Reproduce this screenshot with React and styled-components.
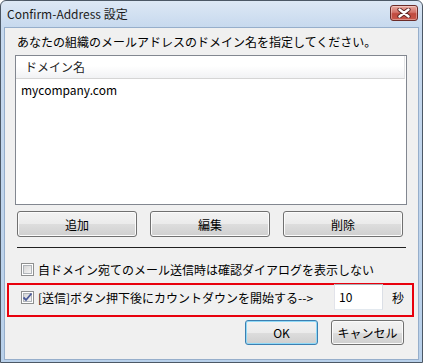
import React from 'react'
import styled, { createGlobalStyle } from 'styled-components'

const GlobalStyle = createGlobalStyle`
  html, body {
    margin: 0;
    padding: 0;
    background: #ffffff;
  }
  * {
    box-sizing: border-box;
  }
`

const Window = styled.div`
  width: 423px;
  height: 363px;
  display: flex;
  flex-direction: column;
  border: 1px solid #4c5866;
  border-radius: 6px 6px 0 0;
  background: linear-gradient(180deg, #dde8f5 0px, #c7d9ee 26px, #b8d0ea 100%);
  padding: 0 3px 2px 3px;
  font-family: "Noto Sans CJK JP", "Noto Sans", sans-serif;
  font-size: 12px;
  color: #000;
`

const TitleBar = styled.div`
  height: 26px;
  display: flex;
  align-items: flex-start;
  justify-content: space-between;
`

const Title = styled.div`
  padding-left: 3px;
  line-height: 26px;
  color: #1b1b1b;
  font-size: 12px;
`

const CloseButton = styled.div`
  width: 28px;
  height: 16px;
  margin-top: 4px;
  margin-right: 1px;
  border: 1px solid #6b2b28;
  border-radius: 3px;
  background: linear-gradient(180deg, #e9aaa0 0%, #d3736a 45%, #bf4a3f 55%, #c9574a 100%);
  box-shadow: inset 0 0 0 1px rgba(255, 255, 255, 0.35);
  display: flex;
  align-items: center;
  justify-content: center;
`

const Client = styled.div`
  flex: 1;
  display: flex;
  flex-direction: column;
  background: #f0f0f0;
  border: 1px solid #96aecb;
  padding: 6px 11px 0 10px;
`

const Label = styled.div`
  line-height: 16px;
  margin-left: 2px;
`

const ListBox = styled.div`
  margin-top: 5px;
  height: 150px;
  border: 1px solid #828790;
  background: #fff;
`

const ListHeader = styled.div`
  height: 23px;
  padding-left: 9px;
  line-height: 22px;
  margin-right: 1px;
  color: #1e1e1e;
  background: linear-gradient(180deg, #ffffff 0%, #ffffff 45%, #f1f2f4 100%);
  border-bottom: 1px solid #d5d5d5;
  border-right: 1px solid #e3e4e6;
`

const ListRow = styled.div`
  padding-left: 5px;
  line-height: 19px;
  margin-top: 1px;
`

const ButtonGrid = styled.div`
  margin: 6px 3px 0 2px;
  display: grid;
  grid-template-columns: repeat(3, 120px);
  gap: 13px;
`

const Button = styled.div`
  height: ${(p) => p.$h || 26}px;
  width: ${(p) => (p.$w ? `${p.$w}px` : 'auto')};
  display: flex;
  align-items: center;
  justify-content: center;
  border: 1px solid ${(p) => (p.$default ? '#3c7fb1' : '#707070')};
  border-radius: 3px;
  background: linear-gradient(180deg, #f2f2f2 0%, #ebebeb 50%, #dddddd 51%, #cfcfcf 100%);
  box-shadow: inset 0 0 0 1px ${(p) => (p.$default ? '#8fd9f7' : '#fbfbfb')};
  color: #000;
`

const Separator = styled.div`
  margin: 10px 1px 0 2px;
  height: 1px;
  background: #202020;
`

const CheckRow = styled.div`
  margin-top: 13px;
  margin-left: 6px;
  height: 16px;
  display: flex;
  align-items: center;
  gap: 4px;
`

const RedBox = styled.div`
  margin: 6px -7px 0 -8px;
  height: 34px;
  border: 2px solid #e8000d;
  padding: 0 8px 6px 12px;
  display: flex;
  align-items: center;
  gap: 4px;
`

const CountInput = styled.div`
  margin-left: auto;
  width: 49px;
  height: 26px;
  background: #fff;
  border: 1px solid;
  border-color: #abadb3 #dbdfe6 #e3e9ef #e2e3ea;
  padding-left: 4px;
  line-height: 24px;
`

const Unit = styled.div`
  margin-left: 5px;
  width: 12px;
`

const Footer = styled.div`
  margin: 3px 3px 0 0;
  display: flex;
  justify-content: flex-end;
  gap: 13px;
`

const Box = styled.div`
  width: 13px;
  height: 13px;
  flex: none;
  border: 1px solid #8e8f8f;
  background: #fff;
  padding: 1px;
`

const BoxInner = styled.div`
  width: 9px;
  height: 9px;
  border: 1px solid #b0b4b9;
  background: linear-gradient(135deg, #d6d6d6 0%, #f4f4f4 100%);
  display: flex;
  align-items: center;
  justify-content: center;
`

const Checkbox = ({ checked }) => (
  <Box>
    <BoxInner>
      {checked && (
        <svg width="9" height="9" viewBox="0 0 9 9" style={{ overflow: 'visible' }}>
          <path d="M0.5 4.5 L3 7 L8.5 0.5" fill="none" stroke="#4a5a99" strokeWidth="1.8" />
        </svg>
      )}
    </BoxInner>
  </Box>
)

const CloseX = () => (
  <svg width="14" height="10" viewBox="0 0 14 10">
    <path d="M2.5 1.5 L11.5 8.5 M11.5 1.5 L2.5 8.5" stroke="#5a2220" strokeWidth="4.2" strokeLinecap="round" />
    <path d="M2.5 1.5 L11.5 8.5 M11.5 1.5 L2.5 8.5" stroke="#ffffff" strokeWidth="2.4" strokeLinecap="round" />
  </svg>
)

const App = () => {
  return (
    <>
      <GlobalStyle />
      <Window>
        <TitleBar>
          <Title>Confirm-Address 設定</Title>
          <CloseButton>
            <CloseX />
          </CloseButton>
        </TitleBar>
        <Client>
          <Label>あなたの組織のメールアドレスのドメイン名を指定してください。</Label>
          <ListBox>
            <ListHeader>ドメイン名</ListHeader>
            <ListRow>mycompany.com</ListRow>
          </ListBox>
          <ButtonGrid>
            <Button>追加</Button>
            <Button>編集</Button>
            <Button>削除</Button>
          </ButtonGrid>
          <Separator />
          <CheckRow>
            <Checkbox />
            <span>自ドメイン宛てのメール送信時は確認ダイアログを表示しない</span>
          </CheckRow>
          <RedBox>
            <Checkbox checked />
            <span>[送信]ボタン押下後にカウントダウンを開始する--&gt;</span>
            <CountInput>10</CountInput>
            <Unit>秒</Unit>
          </RedBox>
          <Footer>
            <Button $default $w={73} $h={25}>OK</Button>
            <Button $w={73} $h={25}>キャンセル</Button>
          </Footer>
        </Client>
      </Window>
    </>
  )
}

export default App
